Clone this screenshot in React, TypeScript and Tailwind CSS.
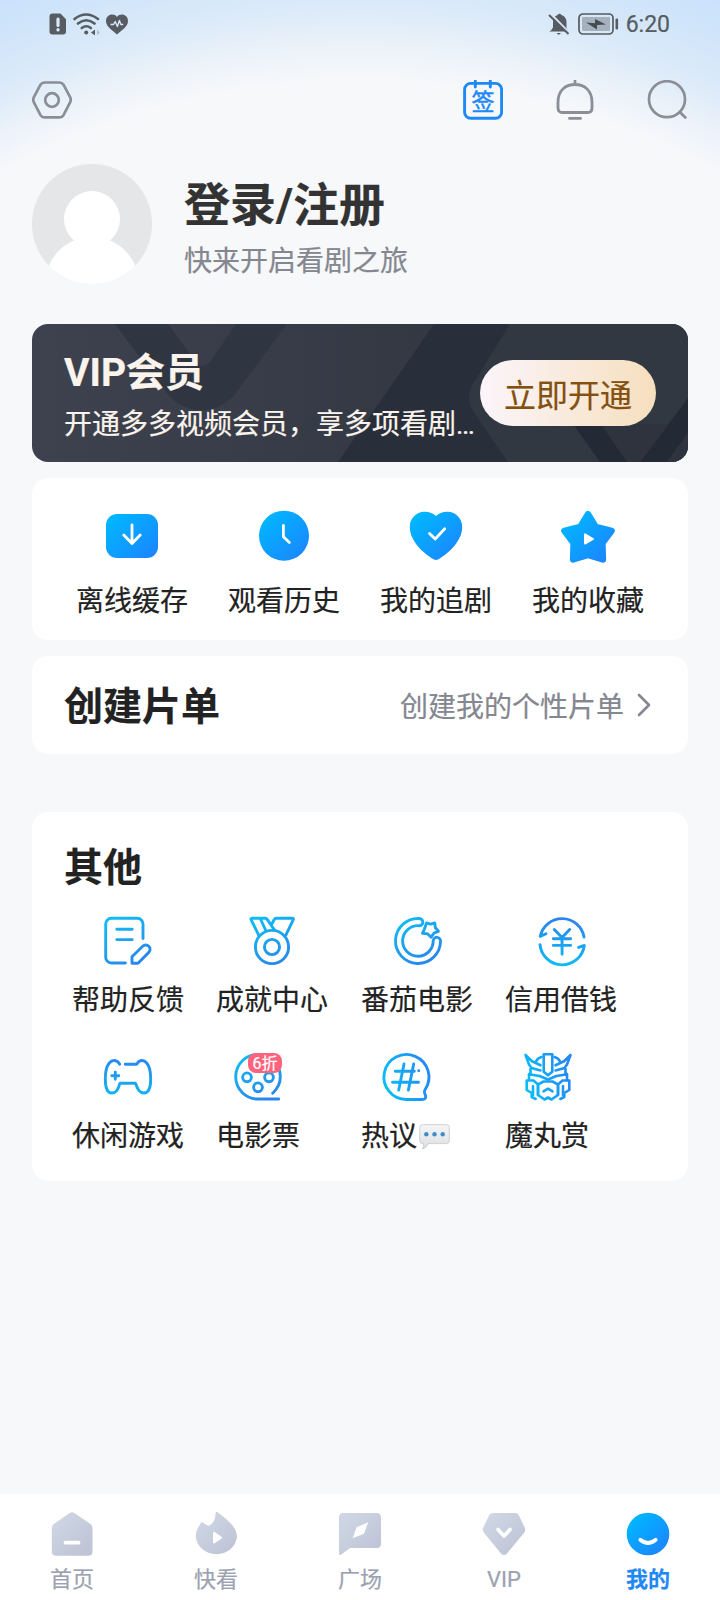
import React from 'react';

interface IconProps {
  children: React.ReactNode;
}

interface NavItem {
  id: string;
  label: string;
  icon: React.ReactNode;
  active?: boolean;
}

const LineIcon: React.FC<IconProps & { stroke?: string }> = ({ children, stroke = 'url(#line)' }) => (
  <svg
    width="56"
    height="56"
    viewBox="0 0 56 56"
    fill="none"
    stroke={stroke}
    strokeWidth="2.9"
    strokeLinecap="round"
    strokeLinejoin="round"
  >
    {children}
  </svg>
);

const SolidIcon: React.FC<IconProps> = ({ children }) => (
  <svg width="56" height="56" viewBox="0 0 56 56" fill="none" strokeLinecap="round" strokeLinejoin="round">
    {children}
  </svg>
);

const TabIcon: React.FC<IconProps> = ({ children }) => (
  <svg width="48" height="48" viewBox="0 0 48 48" fill="none" strokeLinecap="round" strokeLinejoin="round">
    {children}
  </svg>
);

// Gradients shared by all the icons
const Gradients = () => (
  <svg width="0" height="0" className="absolute">
    <defs>
      <linearGradient id="solid" gradientUnits="userSpaceOnUse" x1="8" y1="8" x2="46" y2="48">
        <stop offset="0" stopColor="#00b7ff" />
        <stop offset="1" stopColor="#1a88ff" />
      </linearGradient>
      <linearGradient id="line" gradientUnits="userSpaceOnUse" x1="14" y1="6" x2="38" y2="50">
        <stop offset="0" stopColor="#10bcf2" />
        <stop offset="1" stopColor="#2a86ec" />
      </linearGradient>
      <linearGradient id="lineUp" gradientUnits="userSpaceOnUse" x1="28" y1="50" x2="30" y2="8">
        <stop offset="0" stopColor="#10b9f2" />
        <stop offset="1" stopColor="#2a86ee" />
      </linearGradient>
      <linearGradient id="lineSide" gradientUnits="userSpaceOnUse" x1="6" y1="34" x2="51" y2="22">
        <stop offset="0" stopColor="#08bdf8" />
        <stop offset="1" stopColor="#2588f5" />
      </linearGradient>
      <linearGradient id="tab" gradientUnits="userSpaceOnUse" x1="8" y1="8" x2="38" y2="40">
        <stop offset="0" stopColor="#ced6e5" />
        <stop offset="1" stopColor="#bfc5d6" />
      </linearGradient>
      <linearGradient id="tabActive" gradientUnits="userSpaceOnUse" x1="8" y1="8" x2="38" y2="40">
        <stop offset="0" stopColor="#00b7ff" />
        <stop offset="1" stopColor="#1a88ff" />
      </linearGradient>
      <linearGradient id="bubble" x1="0" y1="0" x2="0" y2="1">
        <stop offset="0" stopColor="#f6f6f7" />
        <stop offset="1" stopColor="#dddee0" />
      </linearGradient>
    </defs>
  </svg>
);

const shortcuts = [
  {
    label: '离线缓存',
    icon: (
      <SolidIcon>
        <rect x="2" y="6" width="52" height="44" rx="11" fill="url(#solid)" />
        <path d="M28 17v18.5M19.8 27l8.2 8.5 8.2-8.5" stroke="#fff" strokeWidth="2.8" />
      </SolidIcon>
    ),
  },
  {
    label: '观看历史',
    icon: (
      <SolidIcon>
        <circle cx="28" cy="27.7" r="25" fill="url(#solid)" />
        <path d="M27.4 17.5v11.3l6 5.6" stroke="#fff" strokeWidth="2.8" />
      </SolidIcon>
    ),
  },
  {
    label: '我的追剧',
    icon: (
      <SolidIcon>
        <path
          d="M28 8C24 4.2 19.5 3.4 15.5 3.8 7.5 4.6 1.8 11 1.8 19c0 13.5 12.5 25.5 23.7 32.2q2.5 1.5 5 0C41.7 44.5 54.2 32.5 54.2 19c0-8-5.7-14.4-13.7-15.2C36.5 3.4 32 4.2 28 8Z"
          fill="url(#solid)"
        />
        <path d="M21.5 25.5l5.7 5.5 9.5-10.2" stroke="#fff" strokeWidth="2.8" />
      </SolidIcon>
    ),
  },
  {
    label: '我的收藏',
    icon: (
      <SolidIcon>
        <path
          d="M28 6.2L35.7 18.9 51.6 22.8 42.4 35 42.9 51.5 28 46.8 13.1 51.5 13.6 35 4.4 22.8 20.3 18.9Z"
          fill="url(#solid)"
          stroke="url(#solid)"
          strokeWidth="6.5"
        />
        <path d="M25 26.4v9.2l8-4.6Z" fill="#fff" stroke="#fff" strokeWidth="2" />
      </SolidIcon>
    ),
  },
];

const others = [
  {
    label: '帮助反馈',
    icon: (
      <LineIcon>
        <path d="M43 25.5V11a5.7 5.7 0 0 0-5.7-5.7H11.4A5.7 5.7 0 0 0 5.7 11v33.3a5.7 5.7 0 0 0 5.7 5.7h14M16.8 16.3h15.4M16.8 26.6h15.4" />
        <path d="M32 50.2v-6.4l10.7-10.5a4.3 4.3 0 0 1 6.1 0 4.3 4.3 0 0 1 0 6.1L38 50.2Z" />
      </LineIcon>
    ),
  },
  {
    label: '成就中心',
    icon: (
      <LineIcon>
        <circle cx="28" cy="34" r="16.6" />
        <circle cx="28" cy="34" r="7.6" />
        <path d="M14.8 22.3L7 6.5Q6.7 5.3 8 5.3H21q1.8 0 2.5 1.6L30.5 17M16.5 6l5.5 12M42 21.8L49.3 6.6q.5-1.3-1-1.3H32.5q-1.6 0-2.4 1.4L27.8 11" />
      </LineIcon>
    ),
  },
  {
    label: '番茄电影',
    icon: (
      <LineIcon>
        <path d="M30.5 5.5A22.5 22.5 0 1 0 51.5 28.5 3.65 3.65 0 0 0 44.2 27.5 15.3 15.3 0 1 1 30 12.7 3.6 3.6 0 0 0 30.5 5.5Z" />
        <path d="M37.5 10l4.2 1.2 4-1.2.7 4.7 3 3.6-4.3 1.7-3 4.2-3.6-3.4-5-.4 2-4.7Z" />
      </LineIcon>
    ),
  },
  {
    label: '信用借钱',
    icon: (
      <LineIcon stroke="url(#lineUp)">
        <path d="M51 24A22.3 22.3 0 0 0 7.2 23.4l5.8-2.6M7 31.7A22.3 22.3 0 0 0 51.3 32.5l-5.8 1.8" />
        <path d="M21.3 16.5l7.7 8 7.7-8M20.3 25.7h17.3M20.3 32.4h17.3" />
        <path d="M29 24.5l.1 16.8" />
      </LineIcon>
    ),
  },
  {
    label: '休闲游戏',
    icon: (
      <LineIcon stroke="url(#lineUp)">
        <path d="M19.7 15.3C17 10.5 12.3 10.5 9.3 14 5.5 18.5 5.3 26 5.3 30c0 6 1.2 14 6.4 14 5.8 0 6.3-5 8.3-9.7H35.5C37.5 39 38.5 44 44 44c5.5 0 6.7-8 6.7-14 0-4-.2-11.5-4-16-3-3.500-7.500-3.500-10 1.300H25.2M15.3 23.2v7M11.8 26.7h7" />
      </LineIcon>
    ),
  },
  {
    label: '电影票',
    badge: '6折',
    icon: (
      <LineIcon>
        <path d="M48.7 50H28A22.3 22.3 0 1 1 50.3 28Q50.3 37 42.7 44.3" />
        <circle cx="17" cy="28.3" r="4.4" />
        <circle cx="39" cy="28.3" r="4.4" />
        <circle cx="28" cy="38.3" r="4.4" />
      </LineIcon>
    ),
  },
  {
    label: '热议',
    bubble: true,
    icon: (
      <LineIcon stroke="url(#lineSide)">
        <path d="M28.3 50.5A22.5 22.5 0 1 1 47 40.7q-1 1.5-.4 3.3l.9 2.5q.9 4-3.5 4Z" />
        <path d="M26 15l-5.3 26M35.7 15l-5.3 26M17.3 22.3h19M14.5 33.2h26M40.7 21.7h.1" />
      </LineIcon>
    ),
  },
  {
    label: '魔丸赏',
    icon: (
      <LineIcon stroke="url(#lineSide)">
        <g strokeWidth="2.6">
          <path d="M24.7 5.3h8.6v17.4L29 26.3l-4.3-3.6Z" />
          <path d="M6.5 6L10 15.5l2.5 3.500 9 2.500M6.500 6l6.500 6.300 8.500 4M51.500 6L48 15.500 45.500 19l-9 2.500M51.500 6L45 12.300l-8.500 4" />
          <path d="M22.5 8q-3.5.8-5.5 4.3M35.5 8q3.5.8 5.5 4.3" />
          <path d="M11.5 20v5.500l9 1.500 8.500 3.500 8.500-3.500 9-1.500V20M10 25v6M48 25v6" />
          <path d="M7.7 31.500h6.800l4.500 4V46M7.700 31.500v9.500l5 3v4l4 2M14 37v9" />
          <path d="M50.3 31.500h-6.800l-4.500 4V46M50.300 31.500v9.500l-5 3v4l-4 2M44 37v9" />
          <path d="M19 35.500l5.500-3h9l5.500 3V46l-6.500 4.500-3.500-2-3.500 2L19 46ZM24.500 42.300l4.500-2.600 4.500 2.600" />
        </g>
      </LineIcon>
    ),
  },
];

const navItems: NavItem[] = [
  {
    id: 'home',
    label: '首页',
    icon: (
      <TabIcon>
        <path d="M21.3 3.2q2.7-2 5.4 0L42.5 14q2 1.500 2 4v23.500q0 4.200-4.200 4.200H8q-4.200 0-4.200-4.200V18q0-2.500 2-4Z" fill="url(#tab)" />
        <path d="M17.5 32.7h13" stroke="#fff" strokeWidth="3.8" />
      </TabIcon>
    ),
  },
  {
    id: 'quick',
    label: '快看',
    icon: (
      <TabIcon>
        <path d="M23.6 3q.6-2 2.3-.6C35 9.500 45 16.500 45 27A20.700 19 0 0 1 3.800 27C3.800 20.500 6.500 17 8.800 13q.9-1.500 2.200-.5l3.500 2.600q2.500 1.500 5-1Q23.300 10.500 23.600 3Z" fill="url(#tab)" />
        <path d="M22 22.7v9.800l7-4.900Z" fill="#fff" stroke="#fff" strokeWidth="2" />
      </TabIcon>
    ),
  },
  {
    id: 'square',
    label: '广场',
    icon: (
      <TabIcon>
        <path d="M7 3h33.500q4.500 0 4.500 4.500v26q0 4.500-4.500 4.500H14L5 44.700q-2 1.200-2-1V7.500Q3 3 7 3Z" fill="url(#tab)" />
        <path d="M32.2 12.300L28 23.800 16.600 28.200l4-11Z" fill="#fff" />
      </TabIcon>
    ),
  },
  {
    id: 'vip',
    label: 'VIP',
    icon: (
      <TabIcon>
        <path d="M12.800 3h22.400q2.300 0 3.500 2l6 12.500q1.200 2.500-.4 5L27 43.500q-3 3-6 0L3.700 22.500q-1.600-2.500-.4-5L9.300 5q1.200-2 3.500-2Z" fill="url(#tab)" />
        <path d="M18 19.500l6 6.500 6-6.500" stroke="#fff" strokeWidth="3.6" />
      </TabIcon>
    ),
  },
  {
    id: 'mine',
    label: '我的',
    active: true,
    icon: (
      <TabIcon>
        <circle cx="24" cy="24" r="21.3" fill="url(#tabActive)" />
        <path d="M16.3 29.8q7.7 6.5 15.4 0" stroke="#fff" strokeWidth="3.8" />
      </TabIcon>
    ),
  },
];

const StatusBar = () => (
  <div className="flex h-12 items-center justify-between pr-[50px] pl-[49px] text-[#565c61]">
    <div className="flex items-center gap-[6px]">
      <svg width="18" height="22" viewBox="0 0 18 22">
        <path d="M3.500.5h8L17 6.200v12.300a3 3 0 0 1-3 3H3.500a3 3 0 0 1-3-3v-15a3 3 0 0 1 3-3Z" fill="currentColor" />
        <path d="M9 6v6.500M9 16.500v.5" stroke="#dbeafa" strokeWidth="3.2" strokeLinecap="round" />
      </svg>
      <svg width="27" height="22" viewBox="0 0 27 22" fill="none" stroke="currentColor" strokeWidth="2.6" strokeLinecap="round">
        <path d="M1.500 6q11.500-9 23.500 0M5 10.500q8.300-6.500 16.500 0M8.800 15q4.500-3.500 9 0" />
        <circle cx="13.2" cy="19.5" r="2" fill="currentColor" stroke="none" />
        <path d="M22 16.500v6l-4-3Z" fill="currentColor" stroke="none" />
        <path d="M24 16.500v6l3-3Z" fill="#b3c2cf" stroke="none" />
      </svg>
      <svg width="22" height="22" viewBox="0 0 22 22">
        <path d="M11 4C8-.2 0 1 0 8.200 0 14 7.500 18 11 21.500 14.500 18 22 14 22 8.200 22 1 14 -.2 11 4Z" fill="currentColor" />
        <path d="M4.500 11.500h3l1.700-3 2.200 5 2-6 1.500 4h2.300" stroke="#d6e8f9" strokeWidth="1.4" fill="none" strokeLinejoin="round" />
      </svg>
    </div>
    <div className="flex items-center">
      <svg width="22" height="22" viewBox="0 0 22 22">
        <path d="M3 17.500l2-3V9q0-6 4.300-6.800Q11.500-.5 13.500 2 18.500 3.500 18.500 9.500v5.500l2 3.500H1Z" fill="currentColor" />
        <path d="M2 0l20 20.500" stroke="#d8e8f8" strokeWidth="2.2" />
        <path d="M1 2l19.500 19" stroke="currentColor" strokeWidth="2" />
        <path d="M8.500 20h4.500l-2.200 2Z" fill="currentColor" />
      </svg>
      <svg width="41" height="22" viewBox="0 0 41 22" className="ml-2">
        <rect x="1" y="1" width="34" height="20" rx="4" fill="none" stroke="currentColor" strokeWidth="1.7" />
        <rect x="4" y="4" width="28" height="14" rx="1" fill="#a5b2bd" />
        <path d="M8 9.500l9 .8V6l11 5.500-9 .5v4.500Z" fill="#454b50" />
        <rect x="37.5" y="5.5" width="2.6" height="11" rx="1" fill="currentColor" />
      </svg>
      <span className="ml-[7px] pt-[2px] text-[23px] leading-7">6:20</span>
    </div>
  </div>
);

const Header = () => (
  <header className="flex h-[104px] items-center justify-between pr-[33px] pl-8">
    <svg width="40" height="40" viewBox="0 0 40 40" fill="none" stroke="#8b8e96" strokeWidth="2.7">
      <path d="M12.500 2.500h15q2.600 0 4 2.200l6.600 12.500q1.300 2.600 0 5.200L31.500 35.200q-1.400 2.200-4 2.200h-15q-2.600 0-4-2.200L1.900 22.400q-1.300-2.600 0-5.200L8.500 4.700q1.400-2.200 4-2.200Z" />
      <circle cx="20" cy="20" r="6.8" />
    </svg>
    <div className="flex gap-[52px]">
      <svg width="40" height="40" viewBox="0 0 40 40" fill="none" stroke="#1d89f5" strokeWidth="2.9">
        <rect x="1.6" y="3.4" width="37" height="34.8" rx="6" />
        <path d="M12.300 1v6M27.300 1v6" strokeLinecap="round" />
        <text x="20" y="29.8" textAnchor="middle" fontSize="23" fill="#1d89f5" stroke="#1d89f5" strokeWidth=".5">
          签
        </text>
      </svg>
      <svg width="40" height="40" viewBox="0 0 40 40" fill="none" stroke="#8b8e96" strokeWidth="2.8" strokeLinecap="round">
        <path d="M3 22C3 11 10 4.500 20 4.500S37 11 37 22v6q0 4.500-4.500 4.500h-25Q3 32.500 3 28ZM20 1v3M14.500 38.400h11" />
      </svg>
      <svg width="40" height="40" viewBox="0 0 40 40" fill="none" stroke="#8b8e96" strokeWidth="2.7" strokeLinecap="round">
        <circle cx="20" cy="19.2" r="18" />
        <path d="M33.300 32.500l5 5" />
      </svg>
    </div>
  </header>
);

const Profile = () => (
  <section className="flex h-[120px] items-start">
    <svg width="120" height="120" viewBox="0 0 120 120">
      <clipPath id="avatar">
        <circle cx="60" cy="60" r="60" />
      </clipPath>
      <g clipPath="url(#avatar)">
        <rect width="120" height="120" fill="#e5e6e8" />
        <circle cx="60" cy="55" r="28" fill="#fff" />
        <circle cx="60" cy="120" r="47" fill="#fff" />
      </g>
    </svg>
    <div className="ml-8 pt-[11px]">
      <h1 className="text-[46px] leading-[60px] font-bold text-[#333]">登录/注册</h1>
      <p className="mt-[7px] text-[28px] leading-10 text-[#84878f]">快来开启看剧之旅</p>
    </div>
  </section>
);

const VipCard = () => (
  <section className="relative mt-10 h-[138px] overflow-hidden rounded-2xl bg-gradient-to-r from-[#3d424e] to-[#2d333d]">
    <svg width="656" height="138" viewBox="0 0 656 138" className="absolute inset-0">
      <path d="M83 0h53l28 38q7 8 14 0L204 0h51l-49 66q-14 20-36 20t-36-18Z" fill="#2f3541" />
      <path d="M402 0h76l-37 60q-8 14 0 27l35 51H306Z" fill="#282e3a" />
      <path d="M478 0h178v138H476l-35-51q-8-13 0-27Z" fill="#313841" />
      <path d="M541 100h28l26 38h-27ZM656 74v35l-21 29h-27Z" fill="#242a35" />
      <path d="M569 100h68l-29 38h-13ZM656 109v29h-21Z" fill="#2e333e" />
    </svg>
    <div className="relative flex h-full items-start justify-between pr-8 pl-8 text-[#fbf4ec]">
      <div className="pt-6">
        <h2 className="text-[39px] leading-[50px] font-bold">VIP会员</h2>
        <p className="mt-[7px] text-[28px] leading-10 whitespace-nowrap">
          开通多多视频会员，享多项看剧<span className="tracking-[-1.5px]">...</span>
        </p>
      </div>
      <button className="mt-9 -ml-4 h-[66px] w-[176px] shrink-0 rounded-full bg-gradient-to-r from-[#fbf5fb] to-[#f6dfbd] pt-[6px] text-[32px] leading-[60px] whitespace-nowrap text-[#83500f]">
        立即开通
      </button>
    </div>
  </section>
);

const SpeechBubble = () => (
  <svg width="31" height="26" viewBox="0 0 31 26" className="ml-[2px]">
    <path d="M3.500.7h24q2.800 0 2.800 2.800v13.300q0 2.800-2.800 2.800H9q-1 4-5.500 5.500 1.800-2.500 1-5.500-3.800.2-3.800-2.800V3.500Q.7.700 3.500.7Z" fill="url(#bubble)" stroke="#c5c6c8" strokeWidth=".8" />
    <circle cx="7.3" cy="10.2" r="2.2" fill="#3e8ecb" />
    <circle cx="15.5" cy="10.2" r="2.2" fill="#3e8ecb" />
    <circle cx="23.7" cy="10.2" r="2.2" fill="#3e8ecb" />
  </svg>
);

const TabBar = () => (
  <nav className="grid h-[106px] grid-cols-5 bg-white pt-4">
    {navItems.map((item) => (
      <div key={item.id} className="flex flex-col items-center">
        {item.icon}
        <span
          className={`mt-2 text-[22px] leading-7 ${item.active ? 'font-bold text-[#1f88f5]' : 'text-[#9ba1b1]'}`}
        >
          {item.label}
        </span>
      </div>
    ))}
  </nav>
);

const App: React.FC = () => {
  return (
    <div className="flex h-[1600px] w-[720px] flex-col bg-[#f7f8fa] bg-[radial-gradient(circle_at_360px_825px,#f7f8fa_742px,#f1f5fa_762px,#e9f1f9_785px,#dfecf9_808px,#d7e8f9_835px,#c9e2fc_900px)] bg-[length:720px_800px] bg-no-repeat font-['Roboto','Noto_Sans_CJK_SC',sans-serif] [-webkit-text-stroke:0.2px]">
      <Gradients />
      <StatusBar />
      <Header />

      <main className="flex-1 px-8 pt-3">
        <Profile />
        <VipCard />

        {/* Shortcuts */}
        <section className="mt-4 grid h-[162px] grid-cols-4 rounded-2xl bg-white px-6 pt-[30px]">
          {shortcuts.map((item) => (
            <div key={item.label} className="flex flex-col items-center">
              {item.icon}
              <span className="mt-[18px] text-[28px] leading-10 whitespace-nowrap text-[#222]">{item.label}</span>
            </div>
          ))}
        </section>

        {/* Playlist */}
        <section className="mt-4 flex h-[98px] items-center justify-between rounded-2xl bg-white pr-[37px] pl-8">
          <h2 className="pt-[3px] text-[39px] leading-[50px] font-bold text-[#222]">创建片单</h2>
          <div className="flex items-center text-[28px] leading-10 text-[#84878f]">
            <span className="pt-[5px]">创建我的个性片单</span>
            <svg width="14" height="24" viewBox="0 0 14 24" fill="none" stroke="#84878f" strokeWidth="2.6" className="ml-[13px]">
              <path d="M2 2l10 10L2 22" strokeLinecap="round" strokeLinejoin="round" />
            </svg>
          </div>
        </section>

        {/* Others */}
        <section className="mt-[58px] h-[369px] rounded-2xl bg-white pt-[31px]">
          <h2 className="pl-8 text-[39px] leading-[50px] font-bold text-[#222]">其他</h2>
          <div className="mt-5 grid grid-cols-[144px_145px_144px_144px] gap-y-7 pl-10">
            {others.map((item) => (
              <div key={item.label} className="relative flex w-fit flex-col items-center">
                {item.icon}
                {item.badge && (
                  <span className="absolute top-1 left-8 flex h-5 w-[34px] items-center justify-center rounded-lg bg-[#fc647e] pt-px text-[16px] leading-5 text-white">
                    {item.badge}
                  </span>
                )}
                <div className="mt-3 flex items-center text-[28px] leading-10 whitespace-nowrap text-[#222]">
                  {item.label}
                  {item.bubble && <SpeechBubble />}
                </div>
              </div>
            ))}
          </div>
        </section>
      </main>

      <TabBar />
    </div>
  );
};

export default App;
